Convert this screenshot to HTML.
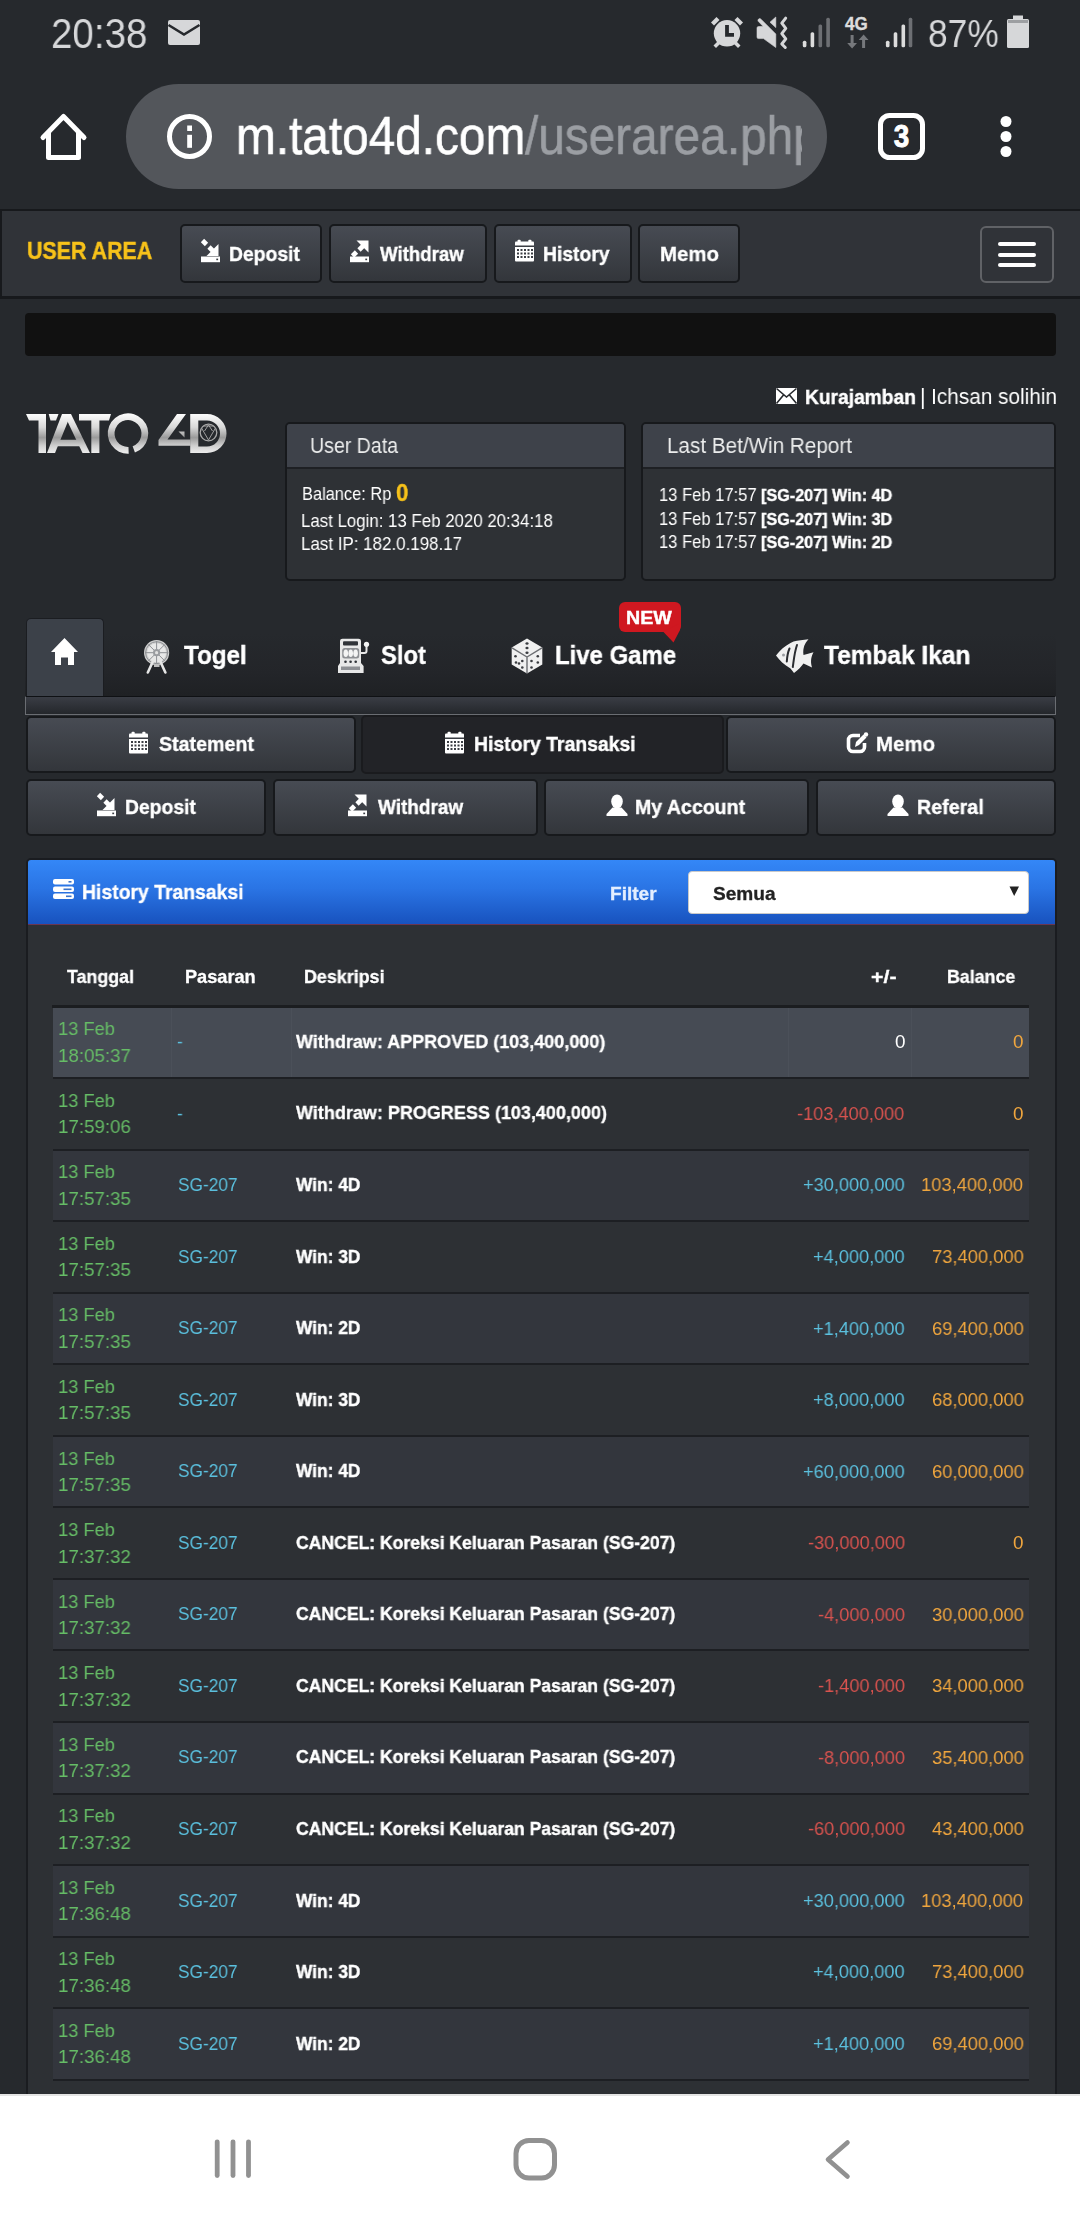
<!DOCTYPE html>
<html><head><meta charset="utf-8">
<style>
*{margin:0;padding:0;box-sizing:border-box}
html,body{width:1080px;height:2220px;overflow:hidden;background:#26292d;font-family:"Liberation Sans",sans-serif}
.a{position:absolute}
.t{position:absolute;white-space:nowrap;transform-origin:0 0;will-change:transform;font-family:"Liberation Sans",sans-serif}
svg{position:absolute;overflow:visible}
.btn{position:absolute;border:2px solid #17191c;border-radius:5px;background:linear-gradient(#474b53,#33363b)}
.panel{position:absolute;border:2px solid #17191c;border-radius:5px;background:#2e3135;overflow:hidden}
.panel .hd{position:absolute;left:0;top:0;right:0;height:45px;background:#3e424a;border-bottom:2px solid #1e2024}
.row{position:absolute;left:52px;width:977px;height:71.5px;border-bottom:2px solid #1c1e21}
</style></head><body>
<!-- status bar + toolbar -->
<div class="a" style="left:0;top:0;width:1080px;height:210px;background:#26292d"></div>
<div class="a" style="left:126px;top:84px;width:701px;height:105px;border-radius:53px;background:#53565b;overflow:hidden"></div>
<!-- navbar -->
<div class="a" style="left:0;top:209px;width:1080px;height:90px;background:#303338;border-top:2px solid #17191c;border-bottom:3px solid #17191c;border-left:2px solid #17191c"></div>
<div class="btn" style="left:180px;top:224px;width:142px;height:59px"></div>
<div class="btn" style="left:329px;top:224px;width:158px;height:59px"></div>
<div class="btn" style="left:494px;top:224px;width:138px;height:59px"></div>
<div class="btn" style="left:638px;top:224px;width:102px;height:59px"></div>
<div class="a" style="left:980px;top:226px;width:74px;height:57px;border:2px solid #606266;border-radius:6px"></div>
<div class="a" style="left:998px;top:242px;width:38px;height:4px;border-radius:2px;background:#fff"></div>
<div class="a" style="left:998px;top:252.5px;width:38px;height:4px;border-radius:2px;background:#fff"></div>
<div class="a" style="left:998px;top:263px;width:38px;height:4px;border-radius:2px;background:#fff"></div>
<!-- black bar -->
<div class="a" style="left:25px;top:313px;width:1031px;height:43px;background:#111;border-radius:4px"></div>
<!-- panels -->
<div class="panel" style="left:285px;top:422px;width:341px;height:159px"><div class="hd"></div></div>
<div class="panel" style="left:641px;top:422px;width:415px;height:159px"><div class="hd"></div></div>
<!-- tab strip -->
<div class="a" style="left:25px;top:582px;width:1031px;height:114px;background:linear-gradient(#26292d,#26292d 45%,#232529 80%,#1f2124)"></div>
<div class="a" style="left:26px;top:618px;width:78px;height:78px;background:#3c4149;border:1px solid #1b1d21;border-bottom:none;border-radius:5px 5px 0 0"></div>
<div class="a" style="left:25px;top:696px;width:1031px;height:19px;background:linear-gradient(#3a3d45,#24272b);border-top:1px solid #0f1114;border-left:1px solid #6a6d72;border-right:1px solid #6a6d72;border-bottom:1px solid #6a6d72"></div>
<div class="a" style="left:619px;top:601.5px;width:62px;height:30px;background:#cf1820;border-radius:6px"></div>
<svg style="left:0;top:0" width="1080" height="2220"><path d="M663 631.5 L681 623 L680 630 L673.5 642.5 Z" fill="#cf1820"/></svg>
<!-- buttons -->
<div class="btn" style="left:26px;top:716px;width:330px;height:57px"></div>
<div class="a" style="left:361px;top:715px;width:363px;height:59px;background:#222327;border:2px solid #1a1b1e;border-radius:5px"></div>
<div class="btn" style="left:726px;top:716px;width:330px;height:57px"></div>
<div class="btn" style="left:26px;top:779px;width:240px;height:57px"></div>
<div class="btn" style="left:273px;top:779px;width:265px;height:57px"></div>
<div class="btn" style="left:544px;top:779px;width:265px;height:57px"></div>
<div class="btn" style="left:816px;top:779px;width:240px;height:57px"></div>
<!-- history panel -->
<div class="a" style="left:26px;top:857.5px;width:1031px;height:1300px;background:#2d3034;border:2px solid #1a1c20;border-radius:5px;overflow:hidden">
  <div class="a" style="left:0;top:0;width:1031px;height:65px;background:linear-gradient(#3487f7,#2a74e4 45%,#1852be);border-bottom:1.5px solid #6b3550"></div>
</div>
<div class="a" style="left:688px;top:870.5px;width:341px;height:43px;background:#fff;border:1px solid #c9c9c9;border-radius:4px"></div>
<svg style="left:0;top:0" width="1080" height="2220"><path d="M1009.5 886.5 L1019 886.5 L1014.2 896 Z" fill="#222"/></svg>
<div class="a" style="left:52px;top:1004.5px;width:977px;height:3px;background:#1b1d20"></div>
<div class="a" style="left:52.5px;top:1007.5px;width:976px;height:71.55px;background:#464b54;border-bottom:2px solid #1d1f23"></div>
<div class="a" style="left:52.5px;top:1079.0px;width:976px;height:71.55px;background:#2d3034;border-bottom:2px solid #1d1f23"></div>
<div class="a" style="left:52.5px;top:1150.6px;width:976px;height:71.55px;background:#33363d;border-bottom:2px solid #1d1f23"></div>
<div class="a" style="left:52.5px;top:1222.2px;width:976px;height:71.55px;background:#2d3034;border-bottom:2px solid #1d1f23"></div>
<div class="a" style="left:52.5px;top:1293.7px;width:976px;height:71.55px;background:#33363d;border-bottom:2px solid #1d1f23"></div>
<div class="a" style="left:52.5px;top:1365.2px;width:976px;height:71.55px;background:#2d3034;border-bottom:2px solid #1d1f23"></div>
<div class="a" style="left:52.5px;top:1436.8px;width:976px;height:71.55px;background:#33363d;border-bottom:2px solid #1d1f23"></div>
<div class="a" style="left:52.5px;top:1508.3px;width:976px;height:71.55px;background:#2d3034;border-bottom:2px solid #1d1f23"></div>
<div class="a" style="left:52.5px;top:1579.9px;width:976px;height:71.55px;background:#33363d;border-bottom:2px solid #1d1f23"></div>
<div class="a" style="left:52.5px;top:1651.4px;width:976px;height:71.55px;background:#2d3034;border-bottom:2px solid #1d1f23"></div>
<div class="a" style="left:52.5px;top:1723.0px;width:976px;height:71.55px;background:#33363d;border-bottom:2px solid #1d1f23"></div>
<div class="a" style="left:52.5px;top:1794.5px;width:976px;height:71.55px;background:#2d3034;border-bottom:2px solid #1d1f23"></div>
<div class="a" style="left:52.5px;top:1866.1px;width:976px;height:71.55px;background:#33363d;border-bottom:2px solid #1d1f23"></div>
<div class="a" style="left:52.5px;top:1937.7px;width:976px;height:71.55px;background:#2d3034;border-bottom:2px solid #1d1f23"></div>
<div class="a" style="left:52.5px;top:2009.2px;width:976px;height:71.55px;background:#33363d;border-bottom:2px solid #1d1f23"></div>
<div class="a" style="left:171.0px;top:1007.5px;width:1px;height:69.5px;background:#4b5059"></div>
<div class="a" style="left:290.5px;top:1007.5px;width:1px;height:69.5px;background:#4b5059"></div>
<div class="a" style="left:788.0px;top:1007.5px;width:1px;height:69.5px;background:#4b5059"></div>
<div class="a" style="left:911.0px;top:1007.5px;width:1px;height:69.5px;background:#4b5059"></div>
<!-- bottom nav -->
<div class="a" style="left:0;top:2093.5px;width:1080px;height:127px;background:#fff;border-top:2.5px solid #e4e4e4"></div>
<svg style="left:0;top:0" width="1080" height="2220" viewBox="0 0 1080 2220">
<defs>
<linearGradient id="silver" gradientUnits="userSpaceOnUse" x1="0" y1="413" x2="0" y2="454">
<stop offset="0" stop-color="#ffffff"/><stop offset="0.35" stop-color="#d8d8d8"/><stop offset="0.6" stop-color="#9a9a9a"/><stop offset="0.8" stop-color="#d0d0d0"/><stop offset="1" stop-color="#f0f0f0"/>
</linearGradient>
</defs>
<!-- status: mail -->
<g fill="#d6d7d9">
<rect x="168" y="20" width="32" height="25" rx="2"/>
</g>
<path d="M168.5 25 L184 34.5 L199.5 25" stroke="#26292d" stroke-width="2.6" fill="none"/>
<!-- alarm -->
<g fill="#d6d7d9">
<circle cx="727" cy="33.3" r="13.2"/>
<path d="M711 22.5 L716.5 17 L719.5 20 L714 25.5 Z"/>
<path d="M743 22.5 L737.5 17 L734.5 20 L740 25.5 Z"/>
<path d="M713.5 45.5 L718 41 L720.5 43.5 L716 48 Z"/>
<path d="M740.5 45.5 L736 41 L733.5 43.5 L738 48 Z"/>
</g>
<path d="M727 25 V34.8 H734" stroke="#26292d" stroke-width="3.8" fill="none"/>
<!-- mute vibrate -->
<path d="M757 28 Q757 26.5 758.5 26.5 H763.2 L758.2 21.3 Q757.5 20 758.6 19 Q759.8 18 761 19.2 L775.8 34 V47.5 L763.5 38.6 H758.5 Q757 38.6 757 37 Z" fill="#d6d7d9" stroke="#d6d7d9" stroke-width="0.6" stroke-linejoin="round"/>
<path d="M775.8 17 V27.6 L770 22.2 Z" fill="#d6d7d9" stroke="#d6d7d9" stroke-width="0.6" stroke-linejoin="round"/>
<path d="M785.7 18.2 L781.8 23.2 L785.8 28.4 L781.8 33.6 L785.8 38.8 L781.8 44 L785.3 47.5" stroke="#d6d7d9" stroke-width="3" fill="none" stroke-linejoin="round" stroke-linecap="round"/>
<!-- signal 1 -->
<g fill="#dcdcdc"><rect x="802.8" y="40.7" width="3.6" height="6.6" rx="1.5"/><rect x="810.6" y="32.3" width="3.6" height="15" rx="1.5"/></g>
<g fill="#6d6f73"><rect x="818.5" y="24.4" width="3.6" height="22.9" rx="1.5"/><rect x="826.3" y="17.8" width="3.6" height="29.5" rx="1.5"/></g>
<!-- 4G -->
<text x="856.4" y="30.5" font-family="Liberation Sans" font-weight="bold" font-size="18.5" fill="#dcdcdc" stroke="#dcdcdc" stroke-width="0.4" text-anchor="middle" transform="translate(856.4 0) scale(0.92 1) translate(-856.4 0)">4G</text>
<g fill="#76787c">
<path d="M850.6 35 H853.6 V43 H857 L852.1 48.5 L847.2 43 H850.6 Z"/>
<path d="M862.1 48 H865.1 V40 H868.5 L863.6 34.5 L858.7 40 H862.1 Z"/>
</g>
<!-- signal 2 -->
<g fill="#dcdcdc"><rect x="885.9" y="40.7" width="3.6" height="6.6" rx="1.5"/><rect x="893.7" y="32.3" width="3.6" height="15" rx="1.5"/><rect x="901.5" y="24.4" width="3.6" height="22.9" rx="1.5"/></g>
<g fill="#6d6f73"><rect x="908.7" y="17.8" width="3.6" height="29.5" rx="1.5"/></g>
<!-- battery -->
<g fill="#d6d7d9"><rect x="1013" y="15.5" width="10" height="4"/><rect x="1007" y="19" width="22" height="29" rx="1.5"/></g>
<rect x="1008" y="20" width="20" height="3" fill="#9d9fa2"/>

<!-- toolbar: home outline -->
<path d="M43 137.5 L63.5 116.5 L84 137.5 M48.5 132 V157.5 H78.5 V132" stroke="#fff" stroke-width="5" fill="none" stroke-linejoin="round" stroke-linecap="round"/>
<!-- info -->
<circle cx="189.5" cy="136.5" r="20" stroke="#fff" stroke-width="5" fill="none"/>
<rect x="187.2" y="134.8" width="4.8" height="13" fill="#fff"/>
<rect x="187.2" y="125.5" width="4.8" height="5.5" fill="#fff"/>
<!-- tabs count -->
<rect x="880.5" y="115.5" width="42" height="42" rx="9" stroke="#fff" stroke-width="5" fill="none"/>
<text x="901.5" y="147.5" font-family="Liberation Sans" font-weight="bold" font-size="31" fill="#fff" stroke="#fff" stroke-width="0.8" text-anchor="middle" transform="translate(901.5 0) scale(0.9 1) translate(-901.5 0)">3</text>
<!-- menu dots -->
<g fill="#fff"><circle cx="1006" cy="121.5" r="5.5"/><circle cx="1006" cy="136.5" r="5.5"/><circle cx="1006" cy="151.5" r="5.5"/></g>

<!-- navbar icons -->
<g id="imp">
<rect x="201" y="256.5" width="19" height="5.7" fill="#fff"/>
<rect x="216.3" y="258.6" width="1.8" height="1.6" fill="#3a3d43"/>
<path d="M218.5 244 V256 H206.5 Z" fill="#fff"/>
<path d="M209 247 L213 251" stroke="#fff" stroke-width="4.6"/>
<path d="M202.5 240.5 L206.5 244.5" stroke="#fff" stroke-width="4.6"/>
</g>
<g id="exp">
<rect x="350" y="256.5" width="19" height="5.7" fill="#fff"/>
<rect x="365.3" y="258.6" width="1.8" height="1.6" fill="#3a3d43"/>
<path d="M368.5 240.5 V252.5 H356.5 Z" fill="#fff" transform="rotate(-90 362.5 246.5)"/>
<path d="M359 250 L363 246" stroke="#fff" stroke-width="4.6"/>
<path d="M352.5 256 L356.5 252" stroke="#fff" stroke-width="4.6"/>
</g>
<!-- calendar (navbar history) -->
<g id="cal">
<rect x="515" y="241.5" width="19" height="20" fill="#fff" rx="1"/>
<rect x="517.5" y="239.8" width="3.2" height="3" fill="#fff" rx="1"/><rect x="528.3" y="239.8" width="3.2" height="3" fill="#fff" rx="1"/>
<rect x="515" y="245.5" width="19" height="1.5" fill="#3a3d43"/>
<g fill="#3a3d43">
<rect x="517" y="249" width="2" height="2"/><rect x="520.5" y="249" width="2" height="2"/><rect x="524" y="249" width="2" height="2"/><rect x="527.5" y="249" width="2" height="2"/><rect x="531" y="249" width="2" height="2"/>
<rect x="517" y="252.5" width="2" height="2"/><rect x="520.5" y="252.5" width="2" height="2"/><rect x="524" y="252.5" width="2" height="2"/><rect x="527.5" y="252.5" width="2" height="2"/><rect x="531" y="252.5" width="2" height="2"/>
<rect x="517" y="256" width="2" height="2"/><rect x="520.5" y="256" width="2" height="2"/><rect x="524" y="256" width="2" height="2"/><rect x="527.5" y="256" width="2" height="2"/><rect x="531" y="256" width="2" height="2"/>
</g>
</g>
<!-- envelope small -->
<rect x="776" y="388" width="21" height="16" fill="#fff"/>
<path d="M776.5 388.5 L786.5 397 L796.5 388.5 M776.5 403.5 L783.5 395 M796.5 403.5 L789.5 395" stroke="#26292d" stroke-width="1.6" fill="none"/>

<!-- logo -->
<g fill="url(#silver)">
<path d="M26 414 H46 V453 H38.5 V420.5 H29 Z"/>
<path d="M62 414 H71 L55 453 H47 Z"/>
<path d="M64 414 H71 L90 453 H82.5 Z"/>
<path d="M48.7 414 H58.5 L56 420.5 H50.5 Z"/>
<path d="M58 439.7 H80 L82.5 446.3 H55.5 Z"/>
<path d="M79 414 H111 L109 420.5 H79 Z"/>
<path d="M91.3 414 H99.4 V453 H91.3 Z"/>
<path d="M128.71 453.74 A20.25 20.25 0 1 1 134.93 452.53 L132.62 446.19 A13.50 13.50 0 1 0 128.47 446.99 Z"/>
<path d="M177 414 H186 L167.5 439.5 H190.5 V445.7 H158.5 V440 Z"/>
<path d="M178.5 431.5 H184.5 V437.5 Z"/>
<path d="M190.2 414 H198.3 V453 H190.2 Z"/>
<path d="M198 414 H207 A19.5 19.5 0 0 1 207 453 H198 V446.5 H207 A13 13 0 0 0 207 420.5 H198 Z"/>
</g>
<circle cx="208.5" cy="432.5" r="8.3" stroke="#a9a9a9" stroke-width="1.3" fill="none"/>
<path d="M201.5 428 L208.5 440 L215.5 428 M203 426 H214 M204.5 431 L208.5 425 L212.5 431" stroke="#a0a0a0" stroke-width="1" fill="none"/>
<!-- tab icons -->
<path d="M51 652 L64.5 638 L78 652 H74 V665 H68 V657.5 H61 V665 H55 V652 Z" fill="#fff"/>
<!-- togel ferris wheel -->
<circle cx="156.6" cy="652.7" r="12.6" fill="#cfcfcf"/>
<circle cx="156.6" cy="652.7" r="9.5" fill="#e8e8e8"/>
<g stroke="#8d8f93" stroke-width="1" fill="none">
<circle cx="156.6" cy="652.7" r="11"/>
<path d="M156.6 641 V664.4 M144.9 652.7 H168.3 M148.3 644.4 L164.9 661 M164.9 644.4 L148.3 661"/>
</g>
<circle cx="156.6" cy="652.7" r="3.6" fill="#9a9ca0"/>
<circle cx="156.6" cy="652.7" r="1.6" fill="#e0e0e0"/>
<g stroke="#e6e6e6" stroke-width="2.6" stroke-linecap="round"><path d="M154.5 658 L147.8 672.5 M158.7 658 L165.4 672.5"/></g>
<rect x="154" y="664" width="5.5" height="3" fill="#bdbdbd"/>
<!-- slot machine -->
<path d="M340 641 Q340 638.8 342.5 638.8 H358.5 Q361 638.8 361 641 V663 L363.6 666 V673 H338 V666 L340 663 Z" fill="#e8e8e8"/>
<rect x="343" y="641.2" width="15" height="4.4" rx="1" fill="#303338"/>
<rect x="342.2" y="648" width="17" height="10.5" rx="2.5" fill="#8e9094"/>
<g fill="#f4f4f4"><ellipse cx="345.8" cy="653.2" rx="2.3" ry="3.8"/><ellipse cx="350.7" cy="653.2" rx="2.3" ry="3.8"/><ellipse cx="355.6" cy="653.2" rx="2.3" ry="3.8"/></g>
<g fill="#303338"><circle cx="345.5" cy="661.7" r="1.3"/><circle cx="350.6" cy="661.7" r="1.3"/><circle cx="355.7" cy="661.7" r="1.3"/></g>
<rect x="341" y="666.5" width="19" height="3.5" fill="#8e9094"/>
<path d="M361 653 H364.5 Q366.5 653 366.5 651 V645" stroke="#e8e8e8" stroke-width="2" fill="none"/>
<circle cx="366.5" cy="644.3" r="2.6" fill="#f4f4f4"/>
<!-- dice -->
<path d="M527 638.6 L542.3 647.5 V664.5 L527 673.5 L511.7 664.5 V647.5 Z" fill="#f0f0f0"/>
<path d="M512 647.8 L527 657 L542 647.8 M527 657 V673" stroke="#6b6d71" stroke-width="1.4" fill="none"/>
<g fill="#3a3c40">
<ellipse cx="527" cy="643.5" rx="1.6" ry="1.2"/><ellipse cx="527" cy="648" rx="1.6" ry="1.2"/><ellipse cx="527" cy="652.7" rx="1.6" ry="1.2"/>
<circle cx="515.5" cy="656.3" r="1.3"/><circle cx="516" cy="662.5" r="1.3"/><circle cx="519" cy="663.5" r="1.3"/><circle cx="522.3" cy="661" r="1.3"/><circle cx="522.3" cy="667.5" r="1.3"/>
<circle cx="537.8" cy="656.3" r="1.3"/><circle cx="531.5" cy="661" r="1.3"/><circle cx="537.8" cy="662.5" r="1.3"/><circle cx="531.5" cy="667.5" r="1.3"/>
</g>
<!-- fish -->
<path d="M776 655.5 C780 650 785 646 790.5 643 L793.5 641.5 C798 640.5 803 640 808.5 639.3 C805 643 802.5 648 803.5 655 L813.5 652.3 C811.5 656 810 661 812 667.5 L803.5 663.5 C801 667 798 670 794 673 L790.5 668.5 C784 664.5 779.5 660.5 776 655.5 Z" fill="#f0f0f0"/>
<g stroke="#2a2c30" stroke-width="2" fill="none" stroke-linecap="round"><path d="M789.5 648.5 C787.5 653 787 658.5 786.8 661.5 M797 645 C794.5 652 793.8 660 792.8 667"/></g>
<circle cx="783.5" cy="655" r="1.5" fill="#9a9ca0"/>

<!-- row1 button icons -->
<g transform="translate(-386 492)">
<rect x="515" y="241.5" width="19" height="20" fill="#fff" rx="1"/>
<rect x="517.5" y="239.8" width="3.2" height="3" fill="#fff" rx="1"/><rect x="528.3" y="239.8" width="3.2" height="3" fill="#fff" rx="1"/>
<rect x="515" y="245.5" width="19" height="1.5" fill="#3a3d43"/>
<g fill="#3a3d43">
<rect x="517" y="249" width="2" height="2"/><rect x="520.5" y="249" width="2" height="2"/><rect x="524" y="249" width="2" height="2"/><rect x="527.5" y="249" width="2" height="2"/><rect x="531" y="249" width="2" height="2"/>
<rect x="517" y="252.5" width="2" height="2"/><rect x="520.5" y="252.5" width="2" height="2"/><rect x="524" y="252.5" width="2" height="2"/><rect x="527.5" y="252.5" width="2" height="2"/><rect x="531" y="252.5" width="2" height="2"/>
<rect x="517" y="256" width="2" height="2"/><rect x="520.5" y="256" width="2" height="2"/><rect x="524" y="256" width="2" height="2"/><rect x="527.5" y="256" width="2" height="2"/><rect x="531" y="256" width="2" height="2"/>
</g>
</g>
<g transform="translate(-70 492)">
<rect x="515" y="241.5" width="19" height="20" fill="#fff" rx="1"/>
<rect x="517.5" y="239.8" width="3.2" height="3" fill="#fff" rx="1"/><rect x="528.3" y="239.8" width="3.2" height="3" fill="#fff" rx="1"/>
<rect x="515" y="245.5" width="19" height="1.5" fill="#3a3d43"/>
<g fill="#3a3d43">
<rect x="517" y="249" width="2" height="2"/><rect x="520.5" y="249" width="2" height="2"/><rect x="524" y="249" width="2" height="2"/><rect x="527.5" y="249" width="2" height="2"/><rect x="531" y="249" width="2" height="2"/>
<rect x="517" y="252.5" width="2" height="2"/><rect x="520.5" y="252.5" width="2" height="2"/><rect x="524" y="252.5" width="2" height="2"/><rect x="527.5" y="252.5" width="2" height="2"/><rect x="531" y="252.5" width="2" height="2"/>
<rect x="517" y="256" width="2" height="2"/><rect x="520.5" y="256" width="2" height="2"/><rect x="524" y="256" width="2" height="2"/><rect x="527.5" y="256" width="2" height="2"/><rect x="531" y="256" width="2" height="2"/>
</g>
</g>
<!-- edit -->
<path d="M860 735.5 H853 A4.5 4.5 0 0 0 848.5 740 V747 A4.5 4.5 0 0 0 853 751.5 H860 A4.5 4.5 0 0 0 864.5 747 V743" stroke="#fff" stroke-width="3.6" fill="none"/>
<path d="M855 747 L856 742 L863.5 734.5 L866.5 737.5 L859 745 Z" fill="#fff"/>
<circle cx="866" cy="734.5" r="2.2" fill="#fff"/>
<!-- row2 button icons -->
<g transform="translate(-104 554)">
<rect x="201" y="256.5" width="19" height="5.7" fill="#fff"/>
<rect x="216.3" y="258.6" width="1.8" height="1.6" fill="#3a3d43"/>
<path d="M218.5 244 V256 H206.5 Z" fill="#fff"/>
<path d="M209 247 L213 251" stroke="#fff" stroke-width="4.6"/>
<path d="M202.5 240.5 L206.5 244.5" stroke="#fff" stroke-width="4.6"/>
</g>
<g transform="translate(-2 554)">
<rect x="350" y="256.5" width="19" height="5.7" fill="#fff"/>
<rect x="365.3" y="258.6" width="1.8" height="1.6" fill="#3a3d43"/>
<path d="M368.5 240.5 V252.5 H356.5 Z" fill="#fff" transform="rotate(-90 362.5 246.5)"/>
<path d="M359 250 L363 246" stroke="#fff" stroke-width="4.6"/>
<path d="M352.5 256 L356.5 252" stroke="#fff" stroke-width="4.6"/>
</g>
<g id="usr" fill="#fff">
<ellipse cx="617" cy="801.5" rx="5.8" ry="7"/>
<path d="M612.5 807.5 H621.5 L627.5 814 V816 H606.5 V814 Z"/>
</g>
<g transform="translate(281 0)" fill="#fff">
<ellipse cx="617" cy="801.5" rx="5.8" ry="7"/>
<path d="M612.5 807.5 H621.5 L627.5 814 V816 H606.5 V814 Z"/>
</g>
<!-- server icon -->
<g fill="#fff">
<rect x="53" y="879" width="21" height="5.6" rx="2"/>
<rect x="53" y="886.5" width="21" height="5.6" rx="2"/>
<rect x="53" y="893.5" width="21" height="5.6" rx="2"/>
</g>
<g fill="#3a73c9"><rect x="68.5" y="881" width="3" height="1.6"/><rect x="63.5" y="888.5" width="8" height="1.6"/><rect x="66" y="895.5" width="5.5" height="1.6"/></g>

<!-- bottom nav -->
<g fill="#919191">
<rect x="214.8" y="2139.4" width="4.8" height="38.6" rx="2.4"/>
<rect x="230.6" y="2139.4" width="4.8" height="38.6" rx="2.4"/>
<rect x="246.1" y="2139.4" width="4.8" height="38.6" rx="2.4"/>
</g>
<rect x="516" y="2140.5" width="38.5" height="37.5" rx="13" stroke="#919191" stroke-width="5" fill="none"/>
<path d="M847.5 2142.5 L828 2159.5 L847.5 2176.5" stroke="#919191" stroke-width="4.6" fill="none" stroke-linecap="round" stroke-linejoin="round"/>
</svg>

<span class="t" style="left:50.87px;top:13px;font-size:42.01px;line-height:42.01px;color:#d6d7d9;transform:scaleX(0.9170)">20:38</span>
<span class="t" style="left:928.10px;top:14px;font-size:39.24px;line-height:39.24px;color:#d6d7d9;transform:scaleX(0.9003)">87%</span>
<span class="t" style="left:236.35px;top:108px;font-size:54.00px;line-height:54.00px;color:#ffffff;transform:scaleX(0.8843);-webkit-text-stroke:0.6px #ffffff">m.tato4d.com</span>
<div class="a" style="left:0;top:0;width:802px;height:210px;overflow:hidden"><span class="t" style="left:525.00px;top:108px;font-size:54.00px;line-height:54.00px;color:#9b9ea3;transform:scaleX(0.8843);-webkit-text-stroke:0.6px #9b9ea3">/userarea.php</span></div>
<span class="t" style="left:26.83px;top:239px;font-size:24.71px;line-height:24.71px;color:#f7c21a;transform:scaleX(0.8662);font-weight:bold;-webkit-text-stroke:0.43px #f7c21a">USER AREA</span>
<span class="t" style="left:229.07px;top:244px;font-size:20.78px;line-height:20.78px;color:#fff;transform:scaleX(0.9305);font-weight:bold;-webkit-text-stroke:0.40px #fff">Deposit</span>
<span class="t" style="left:380.00px;top:244px;font-size:20.78px;line-height:20.78px;color:#fff;transform:scaleX(0.8990);font-weight:bold;-webkit-text-stroke:0.40px #fff">Withdraw</span>
<span class="t" style="left:543.07px;top:244px;font-size:20.78px;line-height:20.78px;color:#fff;transform:scaleX(0.9296);font-weight:bold;-webkit-text-stroke:0.40px #fff">History</span>
<span class="t" style="left:659.62px;top:244px;font-size:20.78px;line-height:20.78px;color:#fff;transform:scaleX(0.9844);font-weight:bold;-webkit-text-stroke:0.3px #fff">Memo</span>
<span class="t" style="left:805.09px;top:386px;font-size:21.08px;line-height:21.08px;color:#fff;transform:scaleX(0.9104);font-weight:bold;-webkit-text-stroke:0.40px #fff">Kurajamban</span>
<span class="t" style="left:919.53px;top:387px;font-size:21.51px;line-height:21.51px;color:#fff;transform:scaleX(0.9679)">|</span>
<span class="t" style="left:930.53px;top:387px;font-size:21.51px;line-height:21.51px;color:#fff;transform:scaleX(0.9679)">Ichsan solihin</span>
<span class="t" style="left:310.10px;top:435px;font-size:21.80px;line-height:21.80px;color:#eceded;transform:scaleX(0.8980)">User Data</span>
<span class="t" style="left:301.50px;top:485px;font-size:18.31px;line-height:18.31px;color:#fff;transform:scaleX(0.8964)">Balance: Rp</span>
<span class="t" style="left:396.00px;top:481px;font-size:24.13px;line-height:24.13px;color:#f7c21a;transform:scaleX(0.9231);font-weight:bold;-webkit-text-stroke:0.40px #f7c21a">0</span>
<span class="t" style="left:301.48px;top:512px;font-size:18.31px;line-height:18.31px;color:#fff;transform:scaleX(0.9204)">Last Login: 13 Feb 2020 20:34:18</span>
<span class="t" style="left:301.47px;top:535px;font-size:18.31px;line-height:18.31px;color:#fff;transform:scaleX(0.9260)">Last IP: 182.0.198.17</span>
<span class="t" style="left:667.05px;top:435px;font-size:21.80px;line-height:21.80px;color:#eceded;transform:scaleX(0.9485)">Last Bet/Win Report</span>
<span class="t" style="left:658.79px;top:486px;font-size:18.17px;line-height:18.17px;color:#fff;transform:scaleX(0.9121)">13 Feb 17:57</span>
<span class="t" style="left:761.20px;top:487px;font-size:17.30px;line-height:17.30px;color:#fff;transform:scaleX(0.9373);font-weight:bold;-webkit-text-stroke:0.40px #fff">[SG-207] Win: 4D</span>
<span class="t" style="left:658.79px;top:510px;font-size:18.17px;line-height:18.17px;color:#fff;transform:scaleX(0.9121)">13 Feb 17:57</span>
<span class="t" style="left:761.20px;top:511px;font-size:17.30px;line-height:17.30px;color:#fff;transform:scaleX(0.9373);font-weight:bold;-webkit-text-stroke:0.40px #fff">[SG-207] Win: 3D</span>
<span class="t" style="left:658.79px;top:533px;font-size:18.17px;line-height:18.17px;color:#fff;transform:scaleX(0.9121)">13 Feb 17:57</span>
<span class="t" style="left:761.20px;top:534px;font-size:17.30px;line-height:17.30px;color:#fff;transform:scaleX(0.9373);font-weight:bold;-webkit-text-stroke:0.40px #fff">[SG-207] Win: 2D</span>
<span class="t" style="left:184.00px;top:643px;font-size:25.87px;line-height:25.87px;color:#fff;transform:scaleX(0.9355);font-weight:bold;-webkit-text-stroke:0.40px #fff">Togel</span>
<span class="t" style="left:380.50px;top:643px;font-size:25.87px;line-height:25.87px;color:#fff;transform:scaleX(0.9182);font-weight:bold;-webkit-text-stroke:0.40px #fff">Slot</span>
<span class="t" style="left:555.07px;top:643px;font-size:25.87px;line-height:25.87px;color:#fff;transform:scaleX(0.9257);font-weight:bold;-webkit-text-stroke:0.40px #fff">Live Game</span>
<span class="t" style="left:824.00px;top:643px;font-size:25.87px;line-height:25.87px;color:#fff;transform:scaleX(0.9458);font-weight:bold;-webkit-text-stroke:0.40px #fff">Tembak Ikan</span>
<span class="t" style="left:625.92px;top:609px;font-size:18.17px;line-height:18.17px;color:#fff;transform:scaleX(1.0800);font-weight:bold;-webkit-text-stroke:0.40px #fff">NEW</span>
<span class="t" style="left:158.50px;top:734px;font-size:20.78px;line-height:20.78px;color:#fff;transform:scaleX(0.9455);font-weight:bold;-webkit-text-stroke:0.40px #fff">Statement</span>
<span class="t" style="left:474.37px;top:734px;font-size:20.78px;line-height:20.78px;color:#fff;transform:scaleX(0.9337);font-weight:bold;-webkit-text-stroke:0.40px #fff">History Transaksi</span>
<span class="t" style="left:875.51px;top:734px;font-size:20.78px;line-height:20.78px;color:#fff;transform:scaleX(0.9861);font-weight:bold;-webkit-text-stroke:0.3px #fff">Memo</span>
<span class="t" style="left:125.07px;top:797px;font-size:20.78px;line-height:20.78px;color:#fff;transform:scaleX(0.9305);font-weight:bold;-webkit-text-stroke:0.40px #fff">Deposit</span>
<span class="t" style="left:377.50px;top:797px;font-size:20.78px;line-height:20.78px;color:#fff;transform:scaleX(0.9139);font-weight:bold;-webkit-text-stroke:0.40px #fff">Withdraw</span>
<span class="t" style="left:635.06px;top:797px;font-size:20.78px;line-height:20.78px;color:#fff;transform:scaleX(0.9421);font-weight:bold;-webkit-text-stroke:0.40px #fff">My Account</span>
<span class="t" style="left:916.55px;top:797px;font-size:20.78px;line-height:20.78px;color:#fff;transform:scaleX(0.9470);font-weight:bold;-webkit-text-stroke:0.40px #fff">Referal</span>
<span class="t" style="left:81.74px;top:882px;font-size:20.20px;line-height:20.20px;color:#fff;transform:scaleX(0.9598);font-weight:bold;-webkit-text-stroke:0.3px #fff">History Transaksi</span>
<span class="t" style="left:610.48px;top:885px;font-size:18.75px;line-height:18.75px;color:#e3eeff;transform:scaleX(1.0166);font-weight:bold;-webkit-text-stroke:0.3px #e3eeff">Filter</span>
<span class="t" style="left:713.30px;top:884px;font-size:19.04px;line-height:19.04px;color:#222;transform:scaleX(1.0028);font-weight:bold;-webkit-text-stroke:0.3px #222">Semua</span>
<span class="t" style="left:67.30px;top:968px;font-size:18.17px;line-height:18.17px;color:#fff;transform:scaleX(0.9820);font-weight:bold;-webkit-text-stroke:0.3px #fff">Tanggal</span>
<span class="t" style="left:184.70px;top:968px;font-size:18.17px;line-height:18.17px;color:#fff;transform:scaleX(1.0005);font-weight:bold;-webkit-text-stroke:0.3px #fff">Pasaran</span>
<span class="t" style="left:303.62px;top:968px;font-size:18.17px;line-height:18.17px;color:#fff;transform:scaleX(0.9849);font-weight:bold;-webkit-text-stroke:0.3px #fff">Deskripsi</span>
<span class="t" style="left:870.70px;top:968px;font-size:18.17px;line-height:18.17px;color:#fff;transform:scaleX(1.1780);font-weight:bold;-webkit-text-stroke:0.3px #fff">+/-</span>
<span class="t" style="left:947.02px;top:968px;font-size:18.17px;line-height:18.17px;color:#fff;transform:scaleX(0.9805);font-weight:bold;-webkit-text-stroke:0.3px #fff">Balance</span>
<span class="t" style="left:57.93px;top:1020px;font-size:18.90px;line-height:18.90px;color:#66bd66;transform:scaleX(0.9685)">13 Feb</span>
<span class="t" style="left:57.91px;top:1047px;font-size:18.90px;line-height:18.90px;color:#66bd66;transform:scaleX(0.9913)">18:05:37</span>
<span class="t" style="left:177.00px;top:1033px;font-size:18.90px;line-height:18.90px;color:#5bc0de;transform:scaleX(0.9165)">-</span>
<span class="t" style="left:296.30px;top:1033px;font-size:18.75px;line-height:18.75px;color:#fff;transform:scaleX(0.9600);font-weight:bold;-webkit-text-stroke:0.3px #fff">Withdraw: APPROVED (103,400,000)</span>
<span class="t" style="left:894.66px;top:1033px;font-size:18.90px;line-height:18.90px;color:#fff;transform:scaleX(0.9641)">0</span>
<span class="t" style="left:1013.28px;top:1033px;font-size:18.90px;line-height:18.90px;color:#f0a63e;transform:scaleX(0.9716)">0</span>
<span class="t" style="left:57.93px;top:1092px;font-size:18.90px;line-height:18.90px;color:#66bd66;transform:scaleX(0.9685)">13 Feb</span>
<span class="t" style="left:57.91px;top:1118px;font-size:18.90px;line-height:18.90px;color:#66bd66;transform:scaleX(0.9913)">17:59:06</span>
<span class="t" style="left:177.00px;top:1105px;font-size:18.90px;line-height:18.90px;color:#5bc0de;transform:scaleX(0.9165)">-</span>
<span class="t" style="left:296.30px;top:1104px;font-size:18.75px;line-height:18.75px;color:#fff;transform:scaleX(0.9600);font-weight:bold;-webkit-text-stroke:0.3px #fff">Withdraw: PROGRESS (103,400,000)</span>
<span class="t" style="left:797.44px;top:1105px;font-size:18.90px;line-height:18.90px;color:#d9534f;transform:scaleX(0.9641)">-103,400,000</span>
<span class="t" style="left:1013.28px;top:1105px;font-size:18.90px;line-height:18.90px;color:#f0a63e;transform:scaleX(0.9716)">0</span>
<span class="t" style="left:57.93px;top:1163px;font-size:18.90px;line-height:18.90px;color:#66bd66;transform:scaleX(0.9685)">13 Feb</span>
<span class="t" style="left:57.91px;top:1190px;font-size:18.90px;line-height:18.90px;color:#66bd66;transform:scaleX(0.9913)">17:57:35</span>
<span class="t" style="left:177.50px;top:1176px;font-size:18.90px;line-height:18.90px;color:#5bc0de;transform:scaleX(0.9165)">SG-207</span>
<span class="t" style="left:296.30px;top:1176px;font-size:18.75px;line-height:18.75px;color:#fff;transform:scaleX(0.9251);font-weight:bold;-webkit-text-stroke:0.40px #fff">Win: 4D</span>
<span class="t" style="left:803.00px;top:1176px;font-size:18.90px;line-height:18.90px;color:#5bc0de;transform:scaleX(0.9641)">+30,000,000</span>
<span class="t" style="left:921.43px;top:1176px;font-size:18.90px;line-height:18.90px;color:#f0a63e;transform:scaleX(0.9716)">103,400,000</span>
<span class="t" style="left:57.93px;top:1235px;font-size:18.90px;line-height:18.90px;color:#66bd66;transform:scaleX(0.9685)">13 Feb</span>
<span class="t" style="left:57.91px;top:1261px;font-size:18.90px;line-height:18.90px;color:#66bd66;transform:scaleX(0.9913)">17:57:35</span>
<span class="t" style="left:177.50px;top:1248px;font-size:18.90px;line-height:18.90px;color:#5bc0de;transform:scaleX(0.9165)">SG-207</span>
<span class="t" style="left:296.30px;top:1248px;font-size:18.75px;line-height:18.75px;color:#fff;transform:scaleX(0.9251);font-weight:bold;-webkit-text-stroke:0.40px #fff">Win: 3D</span>
<span class="t" style="left:813.13px;top:1248px;font-size:18.90px;line-height:18.90px;color:#5bc0de;transform:scaleX(0.9641)">+4,000,000</span>
<span class="t" style="left:931.64px;top:1248px;font-size:18.90px;line-height:18.90px;color:#f0a63e;transform:scaleX(0.9716)">73,400,000</span>
<span class="t" style="left:57.93px;top:1306px;font-size:18.90px;line-height:18.90px;color:#66bd66;transform:scaleX(0.9685)">13 Feb</span>
<span class="t" style="left:57.91px;top:1333px;font-size:18.90px;line-height:18.90px;color:#66bd66;transform:scaleX(0.9913)">17:57:35</span>
<span class="t" style="left:177.50px;top:1319px;font-size:18.90px;line-height:18.90px;color:#5bc0de;transform:scaleX(0.9165)">SG-207</span>
<span class="t" style="left:296.30px;top:1319px;font-size:18.75px;line-height:18.75px;color:#fff;transform:scaleX(0.9251);font-weight:bold;-webkit-text-stroke:0.40px #fff">Win: 2D</span>
<span class="t" style="left:813.13px;top:1320px;font-size:18.90px;line-height:18.90px;color:#5bc0de;transform:scaleX(0.9641)">+1,400,000</span>
<span class="t" style="left:931.64px;top:1320px;font-size:18.90px;line-height:18.90px;color:#f0a63e;transform:scaleX(0.9716)">69,400,000</span>
<span class="t" style="left:57.93px;top:1378px;font-size:18.90px;line-height:18.90px;color:#66bd66;transform:scaleX(0.9685)">13 Feb</span>
<span class="t" style="left:57.91px;top:1404px;font-size:18.90px;line-height:18.90px;color:#66bd66;transform:scaleX(0.9913)">17:57:35</span>
<span class="t" style="left:177.50px;top:1391px;font-size:18.90px;line-height:18.90px;color:#5bc0de;transform:scaleX(0.9165)">SG-207</span>
<span class="t" style="left:296.30px;top:1391px;font-size:18.75px;line-height:18.75px;color:#fff;transform:scaleX(0.9251);font-weight:bold;-webkit-text-stroke:0.40px #fff">Win: 3D</span>
<span class="t" style="left:813.13px;top:1391px;font-size:18.90px;line-height:18.90px;color:#5bc0de;transform:scaleX(0.9641)">+8,000,000</span>
<span class="t" style="left:931.64px;top:1391px;font-size:18.90px;line-height:18.90px;color:#f0a63e;transform:scaleX(0.9716)">68,000,000</span>
<span class="t" style="left:57.93px;top:1450px;font-size:18.90px;line-height:18.90px;color:#66bd66;transform:scaleX(0.9685)">13 Feb</span>
<span class="t" style="left:57.91px;top:1476px;font-size:18.90px;line-height:18.90px;color:#66bd66;transform:scaleX(0.9913)">17:57:35</span>
<span class="t" style="left:177.50px;top:1462px;font-size:18.90px;line-height:18.90px;color:#5bc0de;transform:scaleX(0.9165)">SG-207</span>
<span class="t" style="left:296.30px;top:1462px;font-size:18.75px;line-height:18.75px;color:#fff;transform:scaleX(0.9251);font-weight:bold;-webkit-text-stroke:0.40px #fff">Win: 4D</span>
<span class="t" style="left:803.00px;top:1463px;font-size:18.90px;line-height:18.90px;color:#5bc0de;transform:scaleX(0.9641)">+60,000,000</span>
<span class="t" style="left:931.64px;top:1463px;font-size:18.90px;line-height:18.90px;color:#f0a63e;transform:scaleX(0.9716)">60,000,000</span>
<span class="t" style="left:57.93px;top:1521px;font-size:18.90px;line-height:18.90px;color:#66bd66;transform:scaleX(0.9685)">13 Feb</span>
<span class="t" style="left:57.91px;top:1548px;font-size:18.90px;line-height:18.90px;color:#66bd66;transform:scaleX(0.9913)">17:37:32</span>
<span class="t" style="left:177.50px;top:1534px;font-size:18.90px;line-height:18.90px;color:#5bc0de;transform:scaleX(0.9165)">SG-207</span>
<span class="t" style="left:296.30px;top:1534px;font-size:18.75px;line-height:18.75px;color:#fff;transform:scaleX(0.9380);font-weight:bold;-webkit-text-stroke:0.40px #fff">CANCEL: Koreksi Keluaran Pasaran (SG-207)</span>
<span class="t" style="left:807.57px;top:1534px;font-size:18.90px;line-height:18.90px;color:#d9534f;transform:scaleX(0.9641)">-30,000,000</span>
<span class="t" style="left:1013.28px;top:1534px;font-size:18.90px;line-height:18.90px;color:#f0a63e;transform:scaleX(0.9716)">0</span>
<span class="t" style="left:57.93px;top:1593px;font-size:18.90px;line-height:18.90px;color:#66bd66;transform:scaleX(0.9685)">13 Feb</span>
<span class="t" style="left:57.91px;top:1619px;font-size:18.90px;line-height:18.90px;color:#66bd66;transform:scaleX(0.9913)">17:37:32</span>
<span class="t" style="left:177.50px;top:1605px;font-size:18.90px;line-height:18.90px;color:#5bc0de;transform:scaleX(0.9165)">SG-207</span>
<span class="t" style="left:296.30px;top:1605px;font-size:18.75px;line-height:18.75px;color:#fff;transform:scaleX(0.9380);font-weight:bold;-webkit-text-stroke:0.40px #fff">CANCEL: Koreksi Keluaran Pasaran (SG-207)</span>
<span class="t" style="left:817.70px;top:1606px;font-size:18.90px;line-height:18.90px;color:#d9534f;transform:scaleX(0.9641)">-4,000,000</span>
<span class="t" style="left:931.64px;top:1606px;font-size:18.90px;line-height:18.90px;color:#f0a63e;transform:scaleX(0.9716)">30,000,000</span>
<span class="t" style="left:57.93px;top:1664px;font-size:18.90px;line-height:18.90px;color:#66bd66;transform:scaleX(0.9685)">13 Feb</span>
<span class="t" style="left:57.91px;top:1691px;font-size:18.90px;line-height:18.90px;color:#66bd66;transform:scaleX(0.9913)">17:37:32</span>
<span class="t" style="left:177.50px;top:1677px;font-size:18.90px;line-height:18.90px;color:#5bc0de;transform:scaleX(0.9165)">SG-207</span>
<span class="t" style="left:296.30px;top:1677px;font-size:18.75px;line-height:18.75px;color:#fff;transform:scaleX(0.9380);font-weight:bold;-webkit-text-stroke:0.40px #fff">CANCEL: Koreksi Keluaran Pasaran (SG-207)</span>
<span class="t" style="left:817.70px;top:1677px;font-size:18.90px;line-height:18.90px;color:#d9534f;transform:scaleX(0.9641)">-1,400,000</span>
<span class="t" style="left:931.64px;top:1677px;font-size:18.90px;line-height:18.90px;color:#f0a63e;transform:scaleX(0.9716)">34,000,000</span>
<span class="t" style="left:57.93px;top:1736px;font-size:18.90px;line-height:18.90px;color:#66bd66;transform:scaleX(0.9685)">13 Feb</span>
<span class="t" style="left:57.91px;top:1762px;font-size:18.90px;line-height:18.90px;color:#66bd66;transform:scaleX(0.9913)">17:37:32</span>
<span class="t" style="left:177.50px;top:1748px;font-size:18.90px;line-height:18.90px;color:#5bc0de;transform:scaleX(0.9165)">SG-207</span>
<span class="t" style="left:296.30px;top:1748px;font-size:18.75px;line-height:18.75px;color:#fff;transform:scaleX(0.9380);font-weight:bold;-webkit-text-stroke:0.40px #fff">CANCEL: Koreksi Keluaran Pasaran (SG-207)</span>
<span class="t" style="left:817.70px;top:1749px;font-size:18.90px;line-height:18.90px;color:#d9534f;transform:scaleX(0.9641)">-8,000,000</span>
<span class="t" style="left:931.64px;top:1749px;font-size:18.90px;line-height:18.90px;color:#f0a63e;transform:scaleX(0.9716)">35,400,000</span>
<span class="t" style="left:57.93px;top:1807px;font-size:18.90px;line-height:18.90px;color:#66bd66;transform:scaleX(0.9685)">13 Feb</span>
<span class="t" style="left:57.91px;top:1834px;font-size:18.90px;line-height:18.90px;color:#66bd66;transform:scaleX(0.9913)">17:37:32</span>
<span class="t" style="left:177.50px;top:1820px;font-size:18.90px;line-height:18.90px;color:#5bc0de;transform:scaleX(0.9165)">SG-207</span>
<span class="t" style="left:296.30px;top:1820px;font-size:18.75px;line-height:18.75px;color:#fff;transform:scaleX(0.9380);font-weight:bold;-webkit-text-stroke:0.40px #fff">CANCEL: Koreksi Keluaran Pasaran (SG-207)</span>
<span class="t" style="left:807.57px;top:1820px;font-size:18.90px;line-height:18.90px;color:#d9534f;transform:scaleX(0.9641)">-60,000,000</span>
<span class="t" style="left:931.64px;top:1820px;font-size:18.90px;line-height:18.90px;color:#f0a63e;transform:scaleX(0.9716)">43,400,000</span>
<span class="t" style="left:57.93px;top:1879px;font-size:18.90px;line-height:18.90px;color:#66bd66;transform:scaleX(0.9685)">13 Feb</span>
<span class="t" style="left:57.91px;top:1905px;font-size:18.90px;line-height:18.90px;color:#66bd66;transform:scaleX(0.9913)">17:36:48</span>
<span class="t" style="left:177.50px;top:1892px;font-size:18.90px;line-height:18.90px;color:#5bc0de;transform:scaleX(0.9165)">SG-207</span>
<span class="t" style="left:296.30px;top:1892px;font-size:18.75px;line-height:18.75px;color:#fff;transform:scaleX(0.9251);font-weight:bold;-webkit-text-stroke:0.40px #fff">Win: 4D</span>
<span class="t" style="left:803.00px;top:1892px;font-size:18.90px;line-height:18.90px;color:#5bc0de;transform:scaleX(0.9641)">+30,000,000</span>
<span class="t" style="left:921.43px;top:1892px;font-size:18.90px;line-height:18.90px;color:#f0a63e;transform:scaleX(0.9716)">103,400,000</span>
<span class="t" style="left:57.93px;top:1950px;font-size:18.90px;line-height:18.90px;color:#66bd66;transform:scaleX(0.9685)">13 Feb</span>
<span class="t" style="left:57.91px;top:1977px;font-size:18.90px;line-height:18.90px;color:#66bd66;transform:scaleX(0.9913)">17:36:48</span>
<span class="t" style="left:177.50px;top:1963px;font-size:18.90px;line-height:18.90px;color:#5bc0de;transform:scaleX(0.9165)">SG-207</span>
<span class="t" style="left:296.30px;top:1963px;font-size:18.75px;line-height:18.75px;color:#fff;transform:scaleX(0.9251);font-weight:bold;-webkit-text-stroke:0.40px #fff">Win: 3D</span>
<span class="t" style="left:813.13px;top:1963px;font-size:18.90px;line-height:18.90px;color:#5bc0de;transform:scaleX(0.9641)">+4,000,000</span>
<span class="t" style="left:931.64px;top:1963px;font-size:18.90px;line-height:18.90px;color:#f0a63e;transform:scaleX(0.9716)">73,400,000</span>
<span class="t" style="left:57.93px;top:2022px;font-size:18.90px;line-height:18.90px;color:#66bd66;transform:scaleX(0.9685)">13 Feb</span>
<span class="t" style="left:57.91px;top:2048px;font-size:18.90px;line-height:18.90px;color:#66bd66;transform:scaleX(0.9913)">17:36:48</span>
<span class="t" style="left:177.50px;top:2035px;font-size:18.90px;line-height:18.90px;color:#5bc0de;transform:scaleX(0.9165)">SG-207</span>
<span class="t" style="left:296.30px;top:2035px;font-size:18.75px;line-height:18.75px;color:#fff;transform:scaleX(0.9251);font-weight:bold;-webkit-text-stroke:0.40px #fff">Win: 2D</span>
<span class="t" style="left:813.13px;top:2035px;font-size:18.90px;line-height:18.90px;color:#5bc0de;transform:scaleX(0.9641)">+1,400,000</span>
<span class="t" style="left:931.64px;top:2035px;font-size:18.90px;line-height:18.90px;color:#f0a63e;transform:scaleX(0.9716)">69,400,000</span>
</body></html>
